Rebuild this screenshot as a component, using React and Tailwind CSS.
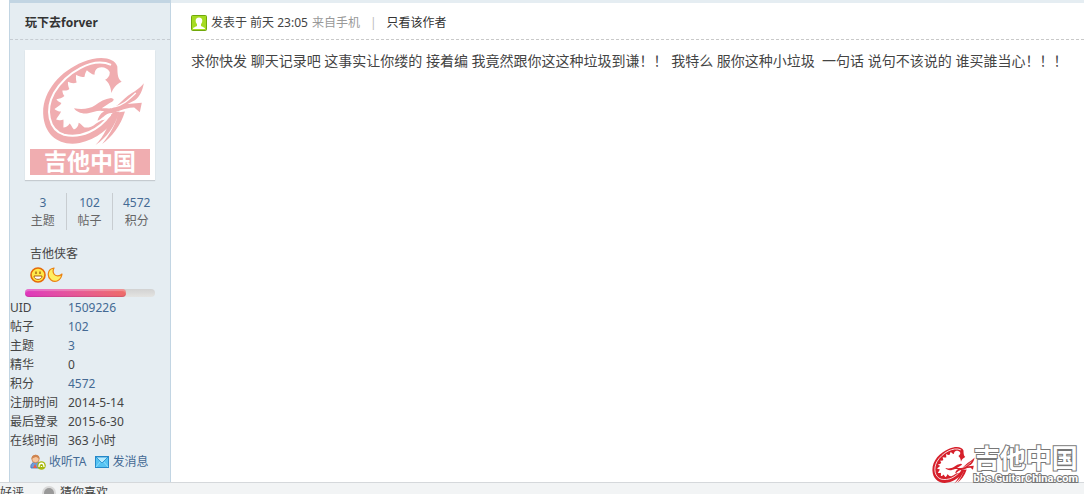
import React from "react";

function Dragon({ className }) {
  return (
    <svg viewBox="82 46 310 272" className={className} fill="currentColor" aria-hidden="true">
      <path d="M309 78C300 50 255 44 205 64C135 92 82 155 85 222C88 286 135 320 195 309C245 299 290 265 316 214L296 216C285 235 275 240 262 240L245 250C232 262 220 263 210 262C203 258 198 250 192 248C192 258 184 267 178 268C172 262 170 255 165 250C160 258 153 262 146 262C146 254 147 246 146 238C140 242 130 240 124 238C128 230 136 222 139 214C131 214 123 210 119 206C128 200 137 195 140 188C134 186 128 182 125 177C134 175 143 173 149 167C145 161 143 155 143 150C151 151 159 151 164 146C161 138 159 130 160 124C168 128 178 130 186 126C184 118 183 110 185 103C193 108 201 111 210 109C211 101 213 95 217 89C224 95 231 101 240 103C240 94 243 86 250 82C263 77 278 80 286 94C287 106 280 113 272 118C283 126 289 138 291 158C296 145 305 132 322 124C308 114 310 96 309 78Z" />
      <path d="M290 73C235 48 155 95 118 157C90 208 101 269 148 284C200 296 253 270 287 224" fill="none" stroke="white" strokeWidth="6" />
      <path d="M178 204C202 209 225 206 242 195C256 184 272 175 290 173C305 176 296 184 287 187L262 204C278 203 288 207 300 201C316 192 326 177 341 166C360 153 376 145 389 128C385 151 378 166 362 180L340 191L383 187L377 216L360 202C330 201 310 219 285 219C272 222 263 236 249 242C253 226 262 216 270 213C250 208 237 216 221 219C203 222 186 216 178 204Z" />
      <path d="M300 200C325 196 343 178 365 158" fill="none" stroke="white" strokeWidth="4" />
      <path d="M314 217C302 258 278 292 243 315C270 287 286 251 291 222ZM332 214C319 258 292 291 263 312C289 281 306 246 314 216Z" />
    </svg>
  );
}

function Face() {
  return (
    <svg width="16" height="16" viewBox="0 0 16 16" aria-hidden="true">
      <circle cx="8" cy="8" r="7" fill="#ffe84a" stroke="#e56a08" strokeWidth="1.6" />
      <path d="M4 9h8c0 4.500-8 4.500-8 0Z" fill="white" stroke="#a65405" strokeWidth=".9" />
      <path d="M6 4.500v2.500M10 4.500v2.500" stroke="#8b4300" strokeWidth="1.1" />
    </svg>
  );
}

function Moon() {
  return (
    <svg width="16" height="16" viewBox="0 0 16 16" aria-hidden="true">
      <path d="M7 1C0 2 0 10 4 13c4 3 10 1 11-6-2 2-6 3-8 0C5.500 5 6 3 7 1Z" fill="#ffee62" stroke="#e98213" strokeWidth="1.2" strokeLinejoin="round" />
    </svg>
  );
}

function Online() {
  return (
    <svg width="16" height="16" viewBox="0 0 16 16" aria-hidden="true">
      <rect x=".5" y=".5" width="15" height="15" rx="1" fill="#a5db22" stroke="#70a80b" />
      <path d="M2 14c0-2 3-2 4-3V9C4 7 4 2.500 8 2.500S12 7 10 9v2c1 1 4 1 4 3Z" fill="white" />
    </svg>
  );
}

function Follow() {
  return (
    <svg width="16" height="16" viewBox="0 0 16 16" aria-hidden="true">
      <path d="M1 14c-1-4 2-6 5-6s6 3 5 6Z" fill="#6c9cdc" stroke="#4272b5" strokeWidth=".8" />
      <circle cx="5.500" cy="5" r="3.700" fill="#f7c79e" stroke="#c57843" strokeWidth=".7" />
      <path d="M1.500 5C1 0 10-1 9.500 5 8 4 7 3 6 3S3 4 1.500 5Z" fill="#cf8550" />
      <path d="M3 14l2-4 2 4Z" fill="#e95b49" />
      <circle cx="11.500" cy="11.500" r="4.300" fill="#a8b90c" />
      <path d="M9 13c0-5 5-5 5 0M11.500 13v-1" fill="none" stroke="white" strokeWidth="1.3" />
    </svg>
  );
}

function Mail() {
  return (
    <svg width="14" height="12" viewBox="0 0 14 12" aria-hidden="true">
      <rect x=".5" y=".5" width="13" height="11" fill="#55c3f2" stroke="#2589c9" />
      <path d="M1 1l6 6 6-6Z" fill="#b8ecff" stroke="#2589c9" strokeWidth=".8" />
      <path d="M1 11l4-5M13 11L9 6" stroke="#8cdcfb" />
    </svg>
  );
}

const stats = [["3", "主题"], ["102", "帖子"], ["4572", "积分"]];

const details = [
  ["UID", "1509226", true],
  ["帖子", "102", true],
  ["主题", "3", true],
  ["精华", "0", false],
  ["积分", "4572", true],
  ["注册时间", "2014-5-14", false],
  ["最后登录", "2015-6-30", false],
  ["在线时间", "363 小时", false],
];

function Sidebar() {
  return (
    <aside className="flex w-[162px] shrink-0 flex-col border-x border-t-3 border-[#c2d5e3] bg-[#e5edf2]">
      <div className="flex h-[37px] items-center border-b border-dashed border-[#c6ccd2] px-[15px] pt-1">
        <a href="#author" className="font-bold text-[#333]">玩下去forver</a>
      </div>
      <a href="#avatar" aria-label="吉他中国" className="mx-[15px] mt-[10px] flex flex-col bg-white px-[5px] pt-[6px] pb-[5px] text-[#f0adb0] shadow-[0_1px_1px_#c5cbd0]">
        <Dragon className="ml-3 h-[90px] w-[103px]" />
        <span className="mt-[3px] block h-[26px] w-full bg-[#f0adb0] text-center text-[23px] leading-[24px] font-bold text-white">吉他中国</span>
      </a>
      <div className="mx-[10px] mt-[13px] grid grid-cols-3 text-center">
        {stats.map(([n, label], i) => (
          <div key={label} className={i < 2 ? "border-r border-[#c8cdd1] pt-px" : "pt-px"}>
            <a href="#stat" className="block text-[#446a94]">{n}</a>
            <span className="block text-[#666]">{label}</span>
          </div>
        ))}
      </div>
      <a href="#rank" className="mx-[20px] mt-[15px]">吉他侠客</a>
      <div className="mx-[20px] mt-1 flex gap-px"><Face /><Moon /></div>
      <div className="mx-[15px] mt-[6px] h-2 rounded-full bg-linear-to-b from-[#d2d2d2] to-[#e4e4e2]">
        <div className="h-2 w-[78%] rounded-full bg-linear-to-r from-[#df36bd] to-[#ee6c68] shadow-[inset_0_2px_1px_#ffffff44,inset_0_-1px_1px_#8d206044]" />
      </div>
      <dl className="mt-px leading-[19px]">
        {details.map(([k, v, linked]) => (
          <div key={k} className="flex">
            <dt className="w-[58px] shrink-0">{k}</dt>
            <dd>{linked ? <a href="#detail" className="text-[#446a94]">{v}</a> : v}</dd>
          </div>
        ))}
      </dl>
      <div className="mx-[20px] mt-[3px] mb-[9px] flex items-center gap-2 whitespace-nowrap text-[#446a94]">
        <a href="#follow" className="flex items-center gap-[3px]"><Follow />收听TA</a>
        <a href="#message" className="flex items-center gap-1"><Mail />发消息</a>
      </div>
    </aside>
  );
}

export default function App() {
  return (
    <div className="relative flex min-h-screen flex-col overflow-hidden bg-white font-['Noto_Sans','Noto_Sans_CJK_SC',sans-serif] text-[12px] leading-[18px] text-[#444]">
      <main className="flex grow pl-[9px]">
        <Sidebar />
        <article className="flex min-w-0 grow flex-col border-t-3 border-[#e5edf2] pl-5">
          <header className="flex h-[37px] items-center border-b border-dashed border-[#c9c9c9] pt-1">
            <Online />
            <span className="ml-1">发表于 前天 23:05</span>
            <a href="#mobile" className="ml-1 text-[#999]">来自手机</a>
            <span className="mx-[10px] text-[#bbb]">|</span>
            <a href="#only" className="text-[#333]">只看该作者</a>
          </header>
          <p className="mt-[10px] text-[14px] leading-[22px]">
            求你快发 聊天记录吧 这事实让你缕的 接着编 我竟然跟你这这种垃圾到谦！！ 我特么 服你这种小垃圾&nbsp; 一句话 说句不该说的 谁买誰当心！！！
          </p>
        </article>
      </main>
      <footer className="flex h-3 shrink-0 items-start overflow-hidden border-t border-[#d5d8db] bg-[#f2f4f5] pt-px">
        <span>好评</span>
        <span className="mt-1 ml-5 size-[10px] shrink-0 rounded-full bg-[#999] ring-2 ring-[#d9d9d9]" />
        <span className="ml-[6px]">猜你喜欢</span>
      </footer>
      <div className="absolute right-[6px] bottom-[9px] flex items-center">
        <Dragon className="h-[38px] w-[43px] text-[#d6202b]" />
        <div className="-ml-px flex flex-col items-center font-bold whitespace-nowrap text-white">
          <span className="text-[26px] leading-[27px] [-webkit-text-stroke:2px_#777] [paint-order:stroke_fill]">吉他中国</span>
          <span className="font-['Roboto',sans-serif] text-[11px] leading-[13px] [-webkit-text-stroke:2px_#777] [paint-order:stroke_fill]">bbs.GuitarChina.com</span>
        </div>
      </div>
    </div>
  );
}
